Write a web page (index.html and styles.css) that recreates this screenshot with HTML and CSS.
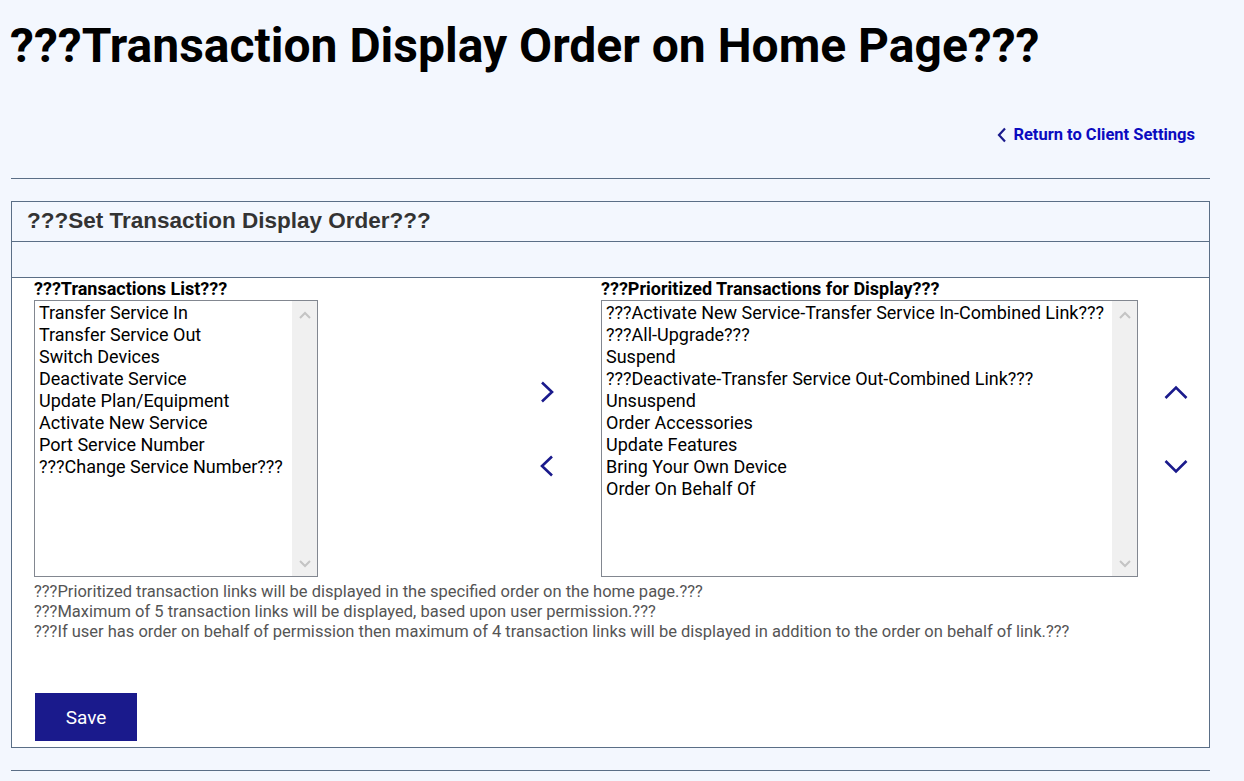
FILE: index.html
```html
<!DOCTYPE html>
<html lang="en">
<head>
<meta charset="UTF-8">
<title>Transaction Display Order</title>
<link rel="stylesheet" href="styles.css">
</head>
<body>

<h1 class="page-title">???Transaction Display Order on Home Page???</h1>

<div class="page">
<div class="back-row">
<a href="#" class="back-link">
<svg width="10" height="16" viewBox="0 0 10 16"><polyline points="8,1.5 2,8 8,14.5" fill="none" stroke="#1a1a8c" stroke-width="2.2"/></svg>
Return to Client Settings</a>
</div>

<hr class="rule">

<div class="panel">
<div class="panel-head">???Set Transaction Display Order???</div>
<div class="panel-strip"></div>

<div class="panel-body">
<div class="lists">
<div class="col">
<div class="list-label">???Transactions List???</div>
<div class="listbox small">
<div class="items">
<div>Transfer Service In</div>
<div>Transfer Service Out</div>
<div>Switch Devices</div>
<div>Deactivate Service</div>
<div>Update Plan/Equipment</div>
<div>Activate New Service</div>
<div>Port Service Number</div>
<div>???Change Service Number???</div>
</div>
<div class="scrollbar">
<svg width="12" height="8" viewBox="0 0 12 8"><polyline points="1,7 6,2 11,7" fill="none" stroke="#c4c4c4" stroke-width="2"/></svg>
<svg width="12" height="8" viewBox="0 0 12 8"><polyline points="1,1 6,6 11,1" fill="none" stroke="#c4c4c4" stroke-width="2"/></svg>
</div>
</div>
</div>

<div class="moves">
<button class="icon-btn" title="Add">
<svg width="14" height="22" viewBox="0 0 14 22"><polyline points="2,1.5 12,11 2,20.5" fill="none" stroke="#1a1a8c" stroke-width="2.6"/></svg>
</button>
<button class="icon-btn" title="Remove">
<svg width="14" height="22" viewBox="0 0 14 22"><polyline points="12,1.5 2,11 12,20.5" fill="none" stroke="#1a1a8c" stroke-width="2.6"/></svg>
</button>
</div>

<div class="col">
<div class="list-label">???Prioritized Transactions for Display???</div>
<div class="listbox wide">
<div class="items">
<div>???Activate New Service-Transfer Service In-Combined Link???</div>
<div>???All-Upgrade???</div>
<div>Suspend</div>
<div>???Deactivate-Transfer Service Out-Combined Link???</div>
<div>Unsuspend</div>
<div>Order Accessories</div>
<div>Update Features</div>
<div>Bring Your Own Device</div>
<div>Order On Behalf Of</div>
</div>
<div class="scrollbar">
<svg width="12" height="8" viewBox="0 0 12 8"><polyline points="1,7 6,2 11,7" fill="none" stroke="#c4c4c4" stroke-width="2"/></svg>
<svg width="12" height="8" viewBox="0 0 12 8"><polyline points="1,1 6,6 11,1" fill="none" stroke="#c4c4c4" stroke-width="2"/></svg>
</div>
</div>
</div>

<div class="sorts">
<button class="icon-btn" title="Move up">
<svg width="24" height="15" viewBox="0 0 24 15"><polyline points="1.5,13 12,2.5 22.5,13" fill="none" stroke="#1a1a8c" stroke-width="2.6"/></svg>
</button>
<button class="icon-btn" title="Move down">
<svg width="24" height="15" viewBox="0 0 24 15"><polyline points="1.5,2 12,12.5 22.5,2" fill="none" stroke="#1a1a8c" stroke-width="2.6"/></svg>
</button>
</div>
</div>

<div class="notes">
<p>???Prioritized transaction links will be displayed in the specified order on the home page.???</p>
<p>???Maximum of 5 transaction links will be displayed, based upon user permission.???</p>
<p>???If user has order on behalf of permission then maximum of 4 transaction links will be displayed in addition to the order on behalf of link.???</p>
</div>

<button class="save-btn">Save</button>
</div>
</div>

<hr class="rule bottom">
</div>

</body>
</html>
```

FILE: styles.css
```css
body {
margin: 0;
background-color: #f3f7fe;
font-family: Roboto, "Liberation Sans", sans-serif;
color: #000;
}

.page-title {
font-size: 48px;
font-weight: bold;
margin: 18px 0 0 10px;
line-height: 56px;
}

.page {
margin-left: 11px;
width: 1199px;
}

.back-row {
display: flex;
justify-content: flex-end;
padding: 51px 15px 0 0;
}

.back-link {
display: flex;
align-items: center;
gap: 6px;
color: #0b0bc0;
font-weight: bold;
font-size: 16.5px;
text-decoration: none;
}

.rule {
border: 0;
border-top: 1px solid #5a6e86;
margin: 34px 0 0 0;
}

.rule.bottom {
margin-top: 22px;
}

.panel {
margin-top: 22px;
border: 1px solid #5a6e86;
background: #fff;
}

.panel-head {
background: #f3f7fe;
font-family: "Liberation Sans", Arial, sans-serif;
font-weight: bold;
font-size: 22.5px;
color: #333;
padding: 0 15px;
height: 39px;
line-height: 38px;
border-bottom: 1px solid #5a6e86;
}

.panel-strip {
background: #f3f7fe;
height: 35px;
border-bottom: 1px solid #5a6e86;
}

.panel-body {
padding: 2px 10px 6px 22px;
}

.lists {
display: flex;
}

.lists > * {
flex-shrink: 0;
}

.list-label {
font-weight: bold;
font-size: 18px;
line-height: 18px;
padding-bottom: 2px;
}

.listbox {
display: flex;
border: 1px solid #828790;
height: 275px;
background: #fff;
}

.listbox.small {
width: 282px;
}

.listbox.wide {
width: 535px;
}

.items {
flex: 1;
padding: 1px 5px 1px 4px;
font-size: 18px;
line-height: 22px;
white-space: nowrap;
overflow: hidden;
}

.scrollbar {
width: 25px;
background: #f0f0f0;
display: flex;
flex-direction: column;
justify-content: space-between;
align-items: center;
padding: 10px 0 8px;
}

.moves {
width: 283px;
display: flex;
flex-direction: column;
align-items: flex-end;
padding: 101px 47px 0 0;
gap: 52px;
box-sizing: border-box;
}

.sorts {
display: flex;
flex-direction: column;
align-items: center;
padding: 105px 0 0 26px;
gap: 59px;
}

.icon-btn {
border: 0;
padding: 0;
background: transparent;
cursor: pointer;
display: block;
line-height: 0;
}

.notes {
margin-top: 5px;
color: #555;
font-size: 16.5px;
}

.notes p {
margin: 0;
line-height: 20px;
}

.save-btn {
margin: 51px 0 0 1px;
width: 102px;
height: 48px;
border: 0;
background: #1a1a8c;
color: #fff;
font-family: Roboto, sans-serif;
font-size: 19px;
cursor: pointer;
}
```
